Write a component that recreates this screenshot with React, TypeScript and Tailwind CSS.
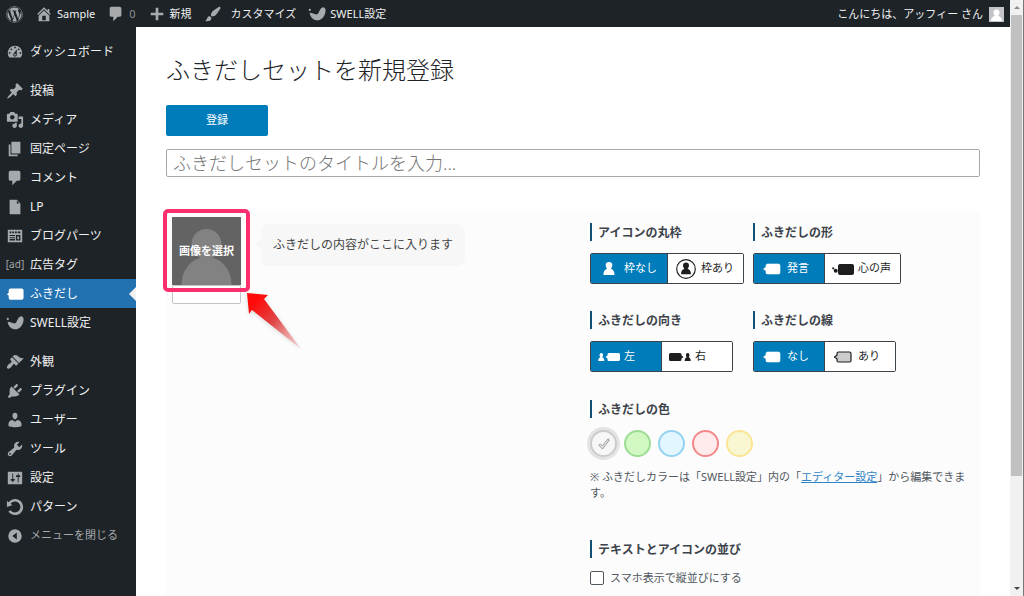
import React, { useState } from "react";
import clsx from "clsx";
import { FaWordpress } from "react-icons/fa";

const PATHS = {
    dashboard:
        "M3.76 16h12.48c1.1-1.37 1.76-3.11 1.76-5 0-4.42-3.58-8-8-8s-8 3.58-8 8c0 1.89.66 3.63 1.76 5zM10 4c.55 0 1 .45 1 1s-.45 1-1 1-1-.45-1-1 .45-1 1-1zM6 6c.55 0 1 .45 1 1s-.45 1-1 1-1-.45-1-1 .45-1 1-1zm8 0c.55 0 1 .45 1 1s-.45 1-1 1-1-.45-1-1 .45-1 1-1zm-5.37 5.55L12 7v6c0 1.1-.9 2-2 2s-2-.9-2-2c0-.57.24-1.08.63-1.45zM4 10c.55 0 1 .45 1 1s-.45 1-1 1-1-.45-1-1 .45-1 1-1zm12 0c.55 0 1 .45 1 1s-.45 1-1 1-1-.45-1-1 .45-1 1-1zm-5 3c0-.55-.45-1-1-1s-1 .45-1 1 .45 1 1 1 1-.45 1-1z",
    post: "M10.44 3.02l1.82-1.82 6.36 6.35-1.83 1.82c-1.05-.68-2.48-.57-3.41.36l-.75.75c-.92.93-1.04 2.35-.35 3.41l-1.83 1.82-2.41-2.41-2.8 2.79c-.42.42-3.38 2.71-3.8 2.29s1.86-3.39 2.28-3.81l2.79-2.79L4.1 9.36l1.83-1.82c1.05.69 2.48.57 3.4-.36l.75-.75c.93-.92 1.05-2.35.36-3.41z",
    media: "M13 11V4c0-.55-.45-1-1-1h-1.67L9 1H5L3.67 3H2c-.55 0-1 .45-1 1v7c0 .55.45 1 1 1h10c.55 0 1-.45 1-1zM7 4.5c1.38 0 2.5 1.12 2.5 2.5S8.38 9.5 7 9.5 4.5 8.38 4.5 7 5.62 4.5 7 4.5zM14 6h5v10.5c0 1.38-1.12 2.5-2.5 2.5S14 17.88 14 16.5s1.12-2.5 2.5-2.5c.17 0 .34.02.5.05V9h-3V6zm-4 8.05V13h2v3.5c0 1.38-1.12 2.5-2.5 2.5S7 17.88 7 16.5 8.12 14 9.5 14c.17 0 .34.02.5.05z",
    page: "M6 15V2h10v13H6zm-1 1h8v2H3V5h2v11z",
    comment: "M5 2h9c1.1 0 2 .9 2 2v7c0 1.1-.9 2-2 2h-2l-5 5v-5H5c-1.1 0-2-.9-2-2V4c0-1.1.9-2 2-2z",
    file: "M12 2l4 4v12H4V2h8zm0 4h3l-3-3v3z",
    parts: "M2 3h16v14H2zM4 5v2h2V5zm3 0v2h2V5zm3 0v2h2V5zm3 0v2h3V5zM4 9v1h6V9zm0 2v1h6v-1zm0 2v2h6v-2zm7-4v6h5V9zm1.500 1.500h2v3h-2z",
    bubble: "M5 4h12.500a2 2 0 0 1 2 2v8.500a2 2 0 0 1-2 2H5a2 2 0 0 1-2-2V12L1 10.300l2-1.800V6a2 2 0 0 1 2-2z",
    bird: "M17.400 2.600c1.900.7 2.600 2.800 1.900 5.700C18 13.400 14.800 17 10.500 17c-4.600 0-7.800-3.200-8.700-8.400 2.600.2 4.300.8 5.900 1.500 1.800.8 3.200.1 4.200-1.800 1.300-2.600 2.700-5.900 5.500-5.700zM2 4.300a1.200 1.200 0 1 0 0 2.400 1.200 1.200 0 0 0 0-2.400z",
    appearance:
        "M14.48 11.06L7.41 3.99l1.5-1.5c.5-.56 2.3-.47 3.51.32 1.21.8 1.43 1.28 2.91 2.1 1.18.64 2.45 1.26 4.45.85zm-.71.71L6.7 4.7 4.93 6.47c-.39.39-.39 1.02 0 1.41l1.06 1.06c.39.39.39 1.03 0 1.42-.6.6-1.43 1.11-2.21 1.69-.35.26-.7.53-1.01.84C1.43 14.23.4 16.08 1.4 17.07c.99 1 2.84-.03 4.18-1.36.31-.31.58-.66.85-1.02.57-.78 1.08-1.61 1.69-2.21.39-.39 1.02-.39 1.41 0l1.06 1.06c.39.39 1.02.39 1.41 0z",
    plugin: "M13.11 4.36L9.87 7.6 8 5.73l3.24-3.24c.35-.34 1.05-.2 1.56.32.52.51.66 1.21.31 1.55zm-8 1.77l.91-1.12 9.01 9.01-1.19.84c-.71.71-2.63 1.16-3.82 1.16H6.14L4.9 17.26c-.59.59-1.54.59-2.12 0-.59-.58-.59-1.53 0-2.12l1.24-1.24v-3.88c0-1.13.4-3.19 1.09-3.89zm7.26 3.97l3.24-3.24c.34-.35 1.04-.21 1.55.31.52.51.66 1.21.31 1.55l-3.24 3.25z",
    user: "M10 9.25c-2.27 0-2.73-3.44-2.73-3.44C7 4.02 7.82 2 9.97 2c2.16 0 2.98 2.02 2.71 3.81 0 0-.41 3.44-2.68 3.44zm0 2.57L12.72 10c2.39 0 4.52 2.33 4.52 4.53v2.49s-3.65 1.13-7.24 1.13c-3.65 0-7.24-1.13-7.24-1.13v-2.49c0-2.25 1.94-4.48 4.47-4.48z",
    tools: "M16.68 9.77c-1.34 1.34-3.3 1.67-4.95.99l-5.41 6.52c-.99.99-2.59.99-3.58 0s-.99-2.59 0-3.57l6.52-5.42c-.68-1.65-.35-3.61.99-4.95 1.28-1.28 3.12-1.62 4.72-1.06l-2.89 2.89 2.82 2.82 2.86-2.87c.53 1.58.18 3.39-1.08 4.65zM3.81 16.21c.4.39 1.04.39 1.43 0 .4-.4.4-1.04 0-1.43-.39-.4-1.03-.4-1.43 0-.39.39-.39 1.03 0 1.43z",
    settings:
        "M18 16V4c0-.55-.45-1-1-1H3c-.55 0-1 .45-1 1v12c0 .55.45 1 1 1h14c.55 0 1-.45 1-1zM8 11h1c.55 0 1 .45 1 1s-.45 1-1 1H8v1.5c0 .28-.22.5-.5.5s-.5-.22-.5-.5V13H6c-.55 0-1-.45-1-1s.45-1 1-1h1V5.5c0-.28.22-.5.5-.5s.5.22.5.5V11zm5-2h-1c-.55 0-1-.45-1-1s.45-1 1-1h1V5.5c0-.28.22-.5.5-.5s.5.22.5.5V7h1c.55 0 1 .45 1 1s-.45 1-1 1h-1v5.5c0 .28-.22.5-.5.5s-.5-.22-.5-.5V9z",
    rotate: "M10.25 1.02c5.1 0 8.75 4.04 8.75 9s-3.65 9-8.75 9c-3.2 0-6.02-1.59-7.68-3.99l2.59-1.52c1.1 1.5 2.86 2.51 4.84 2.51 3.3 0 6-2.79 6-6s-2.7-6-6-6c-1.97 0-3.72 1-4.82 2.49L7 8.02l-6 2v-7L2.89 4.6c1.69-2.17 4.36-3.58 7.36-3.58z",
    collapse: "M10 2.500a7.500 7.500 0 1 0 0 15 7.500 7.500 0 0 0 0-15zm2 3.500v8l-5-4z",
    home: "M16 8.5l1.53 1.53-1.06 1.06L10 4.6l-6.47 6.49-1.06-1.06L10 2.5l4 4v-2h2v4zm-6-2.46l6 5.99V18H4v-5.97zM12 17v-5H8v5h4z",
    plus: "M17 8.500v3h-5.500V17h-3v-5.500H3v-3h5.500V3h3v5.500z",
    brush: "M18.33 3.57s.27-.8-.31-1.36c-.53-.52-1.22-.24-1.22-.24-.61.3-5.76 3.47-7.67 5.57-.86.96-2.06 3.79-1.09 4.82.92.98 3.96-.17 4.79-1 2.06-2.06 5.21-7.17 5.5-7.79zM1.4 17.65c2.37-1.56 1.46-3.41 3.23-4.64.93-.65 2.22-.62 3.08.29.63.67.8 2.57-.16 3.46-1.57 1.45-4 1.55-6.15.89z",
};

type IconName = keyof typeof PATHS;

function Icon({ name }: { name: IconName }) {
    return (
        <svg className="size-[18px] shrink-0" viewBox="0 0 20 20" fill="currentColor" fillRule="evenodd" aria-hidden="true">
            <path d={PATHS[name]} />
        </svg>
    );
}

type MenuItem = { label: string; icon?: IconName; active?: boolean; muted?: boolean };

const menu: MenuItem[][] = [
    [{ label: "ダッシュボード", icon: "dashboard" }],
    [
        { label: "投稿", icon: "post" },
        { label: "メディア", icon: "media" },
        { label: "固定ページ", icon: "page" },
        { label: "コメント", icon: "comment" },
        { label: "LP", icon: "file" },
        { label: "ブログパーツ", icon: "parts" },
        { label: "広告タグ" },
        { label: "ふきだし", icon: "bubble", active: true },
        { label: "SWELL設定", icon: "bird" },
    ],
    [
        { label: "外観", icon: "appearance" },
        { label: "プラグイン", icon: "plugin" },
        { label: "ユーザー", icon: "user" },
        { label: "ツール", icon: "tools" },
        { label: "設定", icon: "settings" },
        { label: "パターン", icon: "rotate" },
        { label: "メニューを閉じる", icon: "collapse", muted: true },
    ],
];

function AdminBar() {
    return (
        <header className="flex h-[27px] shrink-0 items-center justify-between bg-[#1d2327] px-[6px] text-[11px] leading-4 text-[#f0f0f1]">
            <nav className="flex items-center gap-[12px] pt-px">
                <a href="#wp" aria-label="WordPress" className="text-[#a7aaad]">
                    <FaWordpress className="size-[17px]" />
                </a>
                <a href="#site" className="flex items-center gap-1">
                    <span className="text-[#a7aaad]"><Icon name="home" /></span>
                    Sample
                </a>
                <a href="#comments" className="flex items-center gap-1 text-[#8c9196]">
                    <span className="text-[#a7aaad]"><Icon name="comment" /></span>
                    0
                </a>
                <a href="#new" className="flex items-center gap-1">
                    <span className="text-[#a7aaad]"><Icon name="plus" /></span>
                    新規
                </a>
                <a href="#customize" className="flex items-center gap-[9px]">
                    <span className="text-[#a7aaad]"><Icon name="brush" /></span>
                    カスタマイズ
                </a>
                <a href="#swell" className="flex items-center gap-1">
                    <span className="text-[#a7aaad]"><Icon name="bird" /></span>
                    SWELL設定
                </a>
            </nav>
            <a href="#profile" className="flex items-center gap-[6px] pt-px">
                こんにちは、アッフィー さん
                <svg className="size-[15px]" viewBox="0 0 15 15" aria-hidden="true">
                    <path fill="#c3c4c7" d="M0 0h15v15H0z" />
                    <path fill="#fff" d="M7.500 2.500a3 3 0 0 1 3 3c0 1.300-.6 2.300-1.300 2.900.2 1.200 3.800 1.100 3.800 5.600H2c0-4.500 3.600-4.400 3.800-5.600-.7-.6-1.300-1.600-1.300-2.900a3 3 0 0 1 3-3z" />
                </svg>
            </a>
        </header>
    );
}

function Sidebar() {
    return (
        <nav className="w-[136px] shrink-0 bg-[#1d2327] pt-[10px] text-[12px] text-[#f0f0f1]">
            {menu.map((group, i) => (
                <ul key={i} className="mb-[10px]">
                    {group.map((item) => (
                        <li key={item.label}>
                            <a
                                href="#menu"
                                className={clsx(
                                    "relative flex h-[29px] items-center gap-[6px] pl-[6px]",
                                    item.active && "bg-[#2271b1] text-white",
                                    item.muted && "text-[11px] text-[#a7aaad]"
                                )}
                            >
                                <span className={clsx("flex w-[18px] justify-center", !item.active && "text-[#a7aaad]")}>
                                    {item.icon ? <Icon name={item.icon} /> : <span className="text-[10px]">[ad]</span>}
                                </span>
                                {item.label}
                                {item.active && (
                                    <span className="absolute right-0 border-y-[7px] border-r-[7px] border-y-transparent border-r-[#f0f0f1]" />
                                )}
                            </a>
                        </li>
                    ))}
                </ul>
            ))}
        </nav>
    );
}

const personPath =
    "M6 0a3.300 3.300 0 0 1 3.300 3.300c0 1.500-.6 2.700-1.500 3.500C10 7.600 11.500 9 11.500 13H.5C.5 9 2 7.600 4.200 6.800 3.300 6 2.700 4.800 2.700 3.300A3.300 3.300 0 0 1 6 0z";

function PersonIcon() {
    return (
        <svg className="h-[13px] w-3" viewBox="0 0 12 13" fill="currentColor" aria-hidden="true">
            <path d={personPath} />
        </svg>
    );
}

function FramedPersonIcon() {
    return (
        <svg className="size-5" viewBox="0 0 20 20" aria-hidden="true">
            <circle cx="10" cy="10" r="9.300" fill="none" stroke="currentColor" strokeWidth="1.200" />
            <path d={personPath} transform="translate(4.600 3.600) scale(.9)" fill="currentColor" />
        </svg>
    );
}

function SpeechIcon({ outlined }: { outlined?: boolean }) {
    return (
        <svg className="h-3 w-[18px]" viewBox="0 0 18 12" aria-hidden="true">
            <path
                d="M4.500 1h11a1.500 1.500 0 0 1 1.500 1.500v7a1.500 1.500 0 0 1-1.500 1.500h-11A1.500 1.500 0 0 1 3 9.500V7.800L.5 6 3 4.200V2.500A1.500 1.500 0 0 1 4.500 1z"
                fill={outlined ? "#ccc" : "currentColor"}
                stroke="currentColor"
                strokeWidth={outlined ? 1.2 : 0.6}
            />
        </svg>
    );
}

function ThoughtIcon() {
    return (
        <svg className="h-3 w-[22px]" viewBox="0 0 22 12" fill="currentColor" aria-hidden="true">
            <rect x="6" y="1" width="16" height="11" rx="2" />
            <circle cx="3.700" cy="7.800" r="2" />
            <circle cx="1.200" cy="5.300" r="1.100" />
        </svg>
    );
}

function DirectionIcon({ right }: { right?: boolean }) {
    return (
        <svg className="h-[10px] w-[22px]" viewBox="0 0 22 10" fill="currentColor" aria-hidden="true">
            <g transform={right ? "translate(15.400 1)" : "translate(0 1)"}>
                <path d={personPath} transform="scale(.55 .62)" />
            </g>
            <path
                transform={right ? "matrix(-1 0 0 1 22 0)" : undefined}
                d="M11 1h9.500A1.500 1.500 0 0 1 22 2.500v5A1.500 1.500 0 0 1 20.500 9H11a1.500 1.500 0 0 1-1.500-1.500v-1L7.500 5l2-1.500v-1A1.500 1.500 0 0 1 11 1z"
            />
        </svg>
    );
}

function SectionTitle({ children }: { children: React.ReactNode }) {
    return (
        <h2 className="h-[18px] border-l-2 border-[#0e5174] pl-[6px] text-[12px] leading-5 font-bold text-[#3c434a]">
            {children}
        </h2>
    );
}

type Option = { label: string; icon: React.ReactNode; width: string };

function ToggleGroup({ title, options }: { title: string; options: Option[] }) {
    const [selected, setSelected] = useState(0);

    return (
        <section>
            <SectionTitle>{title}</SectionTitle>
            <div className="mt-3 flex h-[31px] w-fit overflow-hidden rounded-xs border border-[#3c434a]" role="group" aria-label={title}>
                {options.map((option, i) => (
                    <button
                        key={option.label}
                        type="button"
                        aria-pressed={selected === i}
                        onClick={() => setSelected(i)}
                        className={clsx(
                            "flex items-center gap-1 pl-[7px] text-[11px]",
                            option.width,
                            i > 0 && "border-l border-[#3c434a]",
                            selected === i ? "bg-[#007cba] text-white" : "bg-white text-[#1e1e1e]"
                        )}
                    >
                        <span className="flex w-[22px] justify-center">{option.icon}</span>
                        {option.label}
                    </button>
                ))}
            </div>
        </section>
    );
}

const colors = [
    { name: "グレー", style: "bg-[#f7f7f7] border-[#ccc]" },
    { name: "グリーン", style: "bg-[#d1f8c2] border-[#9ddd93]" },
    { name: "ブルー", style: "bg-[#e2f6ff] border-[#93d2f0]" },
    { name: "レッド", style: "bg-[#ffebeb] border-[#f48789]" },
    { name: "イエロー", style: "bg-[#f9f7d2] border-[#fbe593]" },
];

function ColorPicker() {
    const [color, setColor] = useState(0);

    return (
        <div className="mt-3 flex gap-[7px]">
            {colors.map((c, i) => (
                <button
                    key={c.name}
                    type="button"
                    aria-label={c.name}
                    aria-pressed={color === i}
                    onClick={() => setColor(i)}
                    className={clsx(
                        "flex size-[27px] items-center justify-center rounded-full border-2",
                        c.style,
                        color === i && "ring-3 ring-[#e4e4e4]"
                    )}
                >
                    {color === i && (
                        <svg className="size-3" viewBox="0 0 12 12" fill="#e8e8e8" stroke="#777" strokeWidth=".7" aria-hidden="true">
                            <path d="M.8 7.200l1.500-1.300 2 2.100L10 .7l1.500 1.200L4.500 11z" />
                        </svg>
                    )}
                </button>
            ))}
        </div>
    );
}

function BalloonPreview() {
    return (
        <div className="relative flex flex-1 items-start p-[6px]">
            <div className="w-[69px] shrink-0">
                <button type="button" className="relative flex h-[68px] w-full items-center justify-center bg-[#636363] text-[11px] font-semibold text-white">
                    <svg className="absolute inset-0 size-full" viewBox="0 0 68 68" fill="#828282" aria-hidden="true">
                        <circle cx="34" cy="27" r="15" />
                        <path d="M9 68c0-14 8-24 18-27h14c10 3 18 13 18 27z" />
                    </svg>
                    <span className="relative">画像を選択</span>
                </button>
                <input type="text" aria-label="アイコン名" className="block h-[19px] w-full rounded-xs border border-[#c3c4c7] bg-white" />
            </div>
            <p className="relative mt-[7px] ml-5 rounded-lg bg-[#f7f7f7] p-3 text-[12px] leading-[18px] text-[#444]">
                <span className="absolute top-[14px] -left-[6px] border-y-[6px] border-r-[6px] border-y-transparent border-r-[#f7f7f7]" />
                ふきだしの内容がここに入ります
            </p>

            {/* callout frame and arrow over the image picker */}
            <div className="pointer-events-none absolute -top-[2px] -left-[3px] h-[83px] w-[87px] rounded-[5px] border-4 border-[#fb2f6e]" />
            <svg className="pointer-events-none absolute top-[78px] left-[76px] h-[66px] w-[66px] drop-shadow-sm" viewBox="0 0 66 66" aria-hidden="true">
                <defs>
                    <linearGradient id="arrow" x1="0" y1="0" x2="1" y2="1">
                        <stop offset="0.150" stopColor="#ff0a0a" />
                        <stop offset="0.500" stopColor="#e04545" />
                        <stop offset="1" stopColor="#f3b3b3" stopOpacity="0.500" />
                    </linearGradient>
                </defs>
                <path d="M5 4l21 2-4 4 37 50-49-39-3 4z" fill="url(#arrow)" />
            </svg>
        </div>
    );
}

function BalloonSettings() {
    return (
        <div className="w-[390px] shrink-0 pt-3 pr-2">
            <div className="grid grid-cols-[163px_1fr] gap-y-[27px]">
                <ToggleGroup
                    title="アイコンの丸枠"
                    options={[
                        { label: "枠なし", icon: <PersonIcon />, width: "w-[76px]" },
                        { label: "枠あり", icon: <FramedPersonIcon />, width: "w-[76px]" },
                    ]}
                />
                <ToggleGroup
                    title="ふきだしの形"
                    options={[
                        { label: "発言", icon: <SpeechIcon />, width: "w-[70px]" },
                        { label: "心の声", icon: <ThoughtIcon />, width: "w-[76px]" },
                    ]}
                />
                <ToggleGroup
                    title="ふきだしの向き"
                    options={[
                        { label: "左", icon: <DirectionIcon />, width: "w-[70px]" },
                        { label: "右", icon: <DirectionIcon right />, width: "w-[71px]" },
                    ]}
                />
                <ToggleGroup
                    title="ふきだしの線"
                    options={[
                        { label: "なし", icon: <SpeechIcon />, width: "w-[70px]" },
                        { label: "あり", icon: <SpeechIcon outlined />, width: "w-[71px]" },
                    ]}
                />
            </div>

            <div className="mt-7">
                <SectionTitle>ふきだしの色</SectionTitle>
                <ColorPicker />
                <p className="mt-3 text-[11px] leading-4 text-[#50575e]">
                    ※ ふきだしカラーは「SWELL設定」内の「
                    <a href="#editor" className="text-[#2e84c6] underline">エディター設定</a>
                    」から編集できます。
                </p>
            </div>

            <div className="mt-[39px]">
                <SectionTitle>テキストとアイコンの並び</SectionTitle>
                <label className="mt-3 flex items-center gap-[6px] text-[11px] leading-4 text-[#50575e]">
                    <input type="checkbox" className="size-[14px] appearance-none rounded-xs border border-[#50575e] bg-white" />
                    スマホ表示で縦並びにする
                </label>
            </div>
        </div>
    );
}

function Scrollbar() {
    return (
        <div className="flex w-[14px] shrink-0 flex-col items-center border-r border-[#777] bg-[#f1f1f1] pt-[6px] pb-[6px]" aria-hidden="true">
            <span className="border-x-[3px] border-b-[3px] border-x-transparent border-b-[#8a8a8a]" />
            <span className="mt-[6px] h-[79%] w-[11px] bg-[#c1c1c1]" />
            <span className="mt-auto border-x-[3px] border-t-[3px] border-x-transparent border-t-[#444]" />
        </div>
    );
}

export default function App() {
    const [title, setTitle] = useState("");

    return (
        <div className="flex h-screen overflow-hidden font-['Noto_Sans','Noto_Sans_CJK_JP',sans-serif]">
            <div className="flex min-w-0 flex-1 flex-col">
                <AdminBar />
                <div className="flex min-h-0 flex-1">
                    <Sidebar />
                    <main className="flex min-w-0 flex-1 flex-col bg-white px-[30px] pt-[27px]">
                        <h1 className="text-[24px] leading-8 font-light text-[#1d2327]">ふきだしセットを新規登録</h1>
                        <button type="button" className="mt-[19px] h-[31px] w-[102px] shrink-0 rounded-xs bg-[#007cba] text-[11px] text-white">
                            登録
                        </button>
                        <input
                            type="text"
                            aria-label="ふきだしセットのタイトル"
                            placeholder="ふきだしセットのタイトルを入力..."
                            value={title}
                            onChange={(e) => setTitle(e.target.value)}
                            className="mt-[13px] h-[28px] w-full shrink-0 rounded-xs border border-[#a7aaad] px-[6px] text-[18px] font-light placeholder:text-[#757575]"
                        />
                        <div className="mt-[34px] flex min-h-0 flex-1 bg-[#fcfcfc]">
                            <BalloonPreview />
                            <BalloonSettings />
                        </div>
                    </main>
                </div>
            </div>
            <Scrollbar />
        </div>
    );
}
